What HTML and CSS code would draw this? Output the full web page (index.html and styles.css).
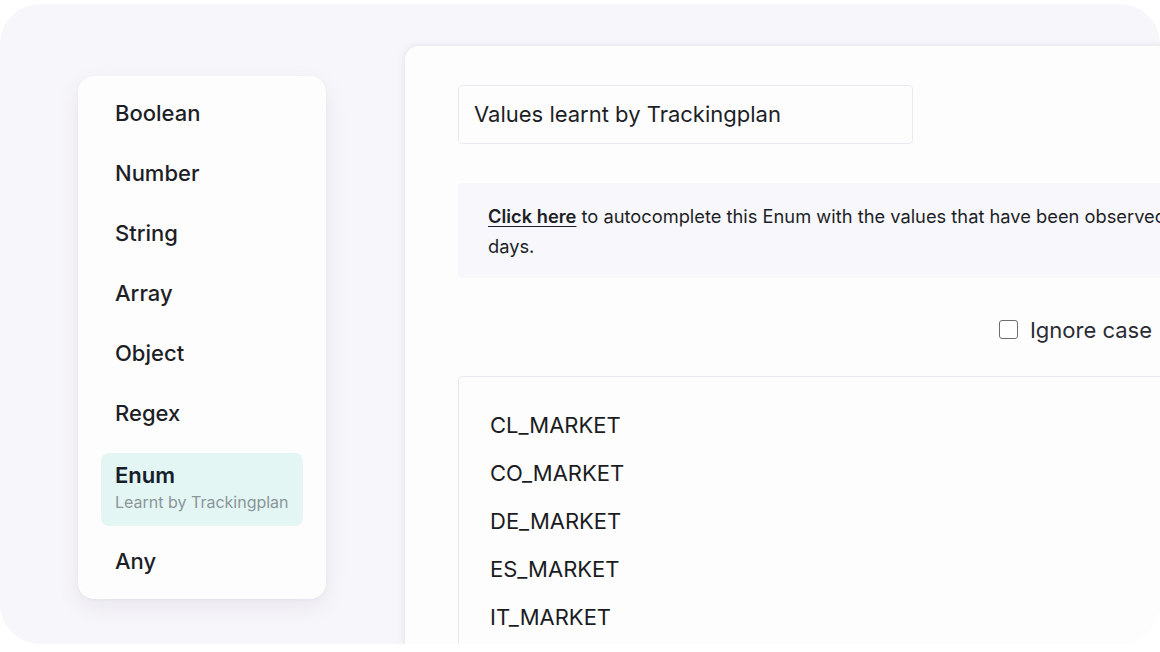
FILE: index.html
```html
<!DOCTYPE html>
<html>
<head>
<meta charset="utf-8">
<link rel="stylesheet" href="styles.css">
</head>
<body>
<div class="frame">
  <div class="types">
    <div class="type">Boolean</div>
    <div class="type">Number</div>
    <div class="type">String</div>
    <div class="type">Array</div>
    <div class="type">Object</div>
    <div class="type">Regex</div>
    <div class="type-active">
      <div class="type-title">Enum</div>
      <div class="type-sub">Learnt by Trackingplan</div>
    </div>
    <div class="type">Any</div>
  </div>
  <div class="panel">
    <div class="select">Values learnt by Trackingplan</div>
    <div class="info"><a class="info-link">Click here</a> to autocomplete this Enum with the values that have been observed in the last 30<br>days.</div>
    <div class="options">
      <label class="check"><span class="box"></span>Ignore case</label>
    </div>
    <div class="values">
      <div class="value">CL_MARKET</div>
      <div class="value">CO_MARKET</div>
      <div class="value">DE_MARKET</div>
      <div class="value">ES_MARKET</div>
      <div class="value">IT_MARKET</div>
    </div>
  </div>
</div>
</body>
</html>
```

FILE: styles.css
```css
html, body {
  margin: 0;
  padding: 0;
  background: #ffffff;
  width: 1160px;
  height: 652px;
  overflow: hidden;
}
body {
  font-family: Inter, "Noto Sans", sans-serif;
  color: #1d1f26;
}
.frame {
  margin-top: 4px;
  height: 640px;
  border-radius: 40px;
  background: #f7f6fa;
  overflow: hidden;
  display: flex;
  align-items: flex-start;
  padding: 42px 0 0 78px;
  box-sizing: border-box;
}
.types {
  flex: 0 0 248px;
  margin-top: 30px;
  background: #fefdfe;
  border-radius: 16px;
  box-shadow: 0 8px 24px rgba(40, 30, 70, 0.07), 0 1px 3px rgba(40, 30, 70, 0.04);
  padding: 7px 0 8px;
  box-sizing: border-box;
}
.type {
  height: 60px;
  line-height: 60px;
  padding-left: 37px;
  font-size: 22px;
  font-weight: 450;
}
.type-active {
  margin: 10px 23px 5px;
  height: 73px;
  box-sizing: border-box;
  background: #e3f6f4;
  border-radius: 8px;
  padding: 7px 14px 0;
}
.type-title {
  font-size: 22px;
  font-weight: 600;
  line-height: 30px;
  color: #17202a;
}
.type-sub {
  font-size: 16px;
  line-height: 24px;
  color: #8b959a;
}
.panel {
  margin-left: 79px;
  flex: 0 0 900px;
  height: 620px;
  background: #fefdfe;
  border-radius: 14px 0 0 0;
  box-shadow: -2px 0 10px rgba(40, 30, 70, 0.05), 0 -1px 4px rgba(40, 30, 70, 0.04);
  padding: 39px 0 0 53px;
  box-sizing: border-box;
}
.select {
  width: 455px;
  height: 59px;
  box-sizing: border-box;
  border: 1px solid #ebe9f0;
  border-radius: 4px;
  padding-left: 15px;
  line-height: 57px;
  font-size: 22px;
}
.info {
  margin-top: 39px;
  width: 800px;
  height: 95px;
  box-sizing: border-box;
  background: #f8f7fb;
  border-radius: 4px;
  padding: 18px 30px 0;
  font-size: 18.3px;
  line-height: 30px;
  color: #1d1f26;
  white-space: nowrap;
}
.info-link {
  font-weight: 600;
  text-decoration: underline;
  text-underline-offset: 3px;
}
.options {
  width: 694px;
  height: 98px;
  display: flex;
  justify-content: flex-end;
  align-items: center;
}
.check {
  display: flex;
  align-items: center;
  gap: 12px;
  font-size: 22px;
  color: #2a2c33;
  margin-top: 5px;
}
.box {
  width: 17px;
  height: 17px;
  border: 1.5px solid #6b6d74;
  border-radius: 3px;
  background: #fff;
}
.values {
  width: 800px;
  height: 300px;
  box-sizing: border-box;
  border: 1px solid #ebe9f0;
  border-radius: 4px;
  padding: 24px 0 0 31px;
}
.value {
  height: 48px;
  line-height: 48px;
  font-size: 22px;
  color: #1a1c22;
}
```
